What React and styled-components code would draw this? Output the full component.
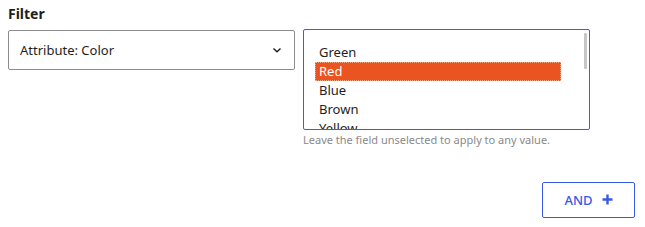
import React from "react";
import styled, { createGlobalStyle } from "styled-components";

const Global = createGlobalStyle`
  html, body { margin: 0; padding: 0; background: #fff; }
  body { font-family: "Noto Sans", "Open Sans", sans-serif; color: #1e1e1e; }
  * { box-sizing: border-box; }
`;

const Page = styled.div`
  width: 645px;
  height: 227px;
  padding: 4px 8px 0 8px;
  display: flex;
  flex-direction: column;
`;

const Label = styled.div`
  font-size: 14px;
  font-weight: 700;
  line-height: 20px;
  height: 20px;
  color: #1e1e1e;
  margin-bottom: 5px;
`;

const Row = styled.div`
  display: flex;
  align-items: flex-start;
  gap: 8px;
`;

const Select = styled.div`
  width: 287px;
  height: 40px;
  margin-top: 1px;
  border: 1px solid #8c8c8c;
  border-radius: 2px;
  display: flex;
  align-items: center;
  justify-content: space-between;
  padding: 0 11px 0 11px;
  font-size: 13px;
  color: #1e1e1e;
`;

const Chevron = styled.svg`
  width: 12px;
  height: 12px;
`;

const ListCol = styled.div`
  display: flex;
  flex-direction: column;
  gap: 3px;
`;

const ListBox = styled.div`
  position: relative;
  width: 287px;
  height: 101px;
  border: 1px solid #3b5ee6;
  border-radius: 2px;
  padding: 13px 28px 0 11px;
  overflow: hidden;
`;

const Option = styled.div`
  height: 19px;
  line-height: 19px;
  font-size: 13px;
  padding-left: 4px;
  color: ${p => (p.$selected ? "#fff" : "#1e1e1e")};
  background: ${p => (p.$selected ? "#e95420" : "transparent")};
  outline: ${p => (p.$selected ? "1px dotted #f7a784" : "none")};
  outline-offset: -1px;
`;

const Thumb = styled.div`
  position: absolute;
  right: 2px;
  top: 3px;
  width: 3px;
  height: 36px;
  background: #c6c6c6;
  border-radius: 1px;
`;

const Help = styled.div`
  font-size: 11px;
  color: #8a8a8a;
  line-height: 14px;
`;

const Footer = styled.div`
  display: flex;
  justify-content: flex-end;
  margin-top: 35px;
  padding-right: 2px;
`;

const AndButton = styled.button`
  width: 93px;
  height: 36px;
  border: 1px solid #3858e9;
  border-radius: 2px;
  background: #fff;
  color: #3858e9;
  font-family: inherit;
  font-size: 13px;
  font-weight: 500;
  display: flex;
  align-items: center;
  justify-content: center;
  gap: 9px;
  padding: 0;
  cursor: pointer;
`;

const Plus = styled.svg`
  width: 11px;
  height: 11px;
  margin-top: -2px;
`;

const colors = ["Green", "Red", "Blue", "Brown", "Yellow"];

export default function App() {
  return (
    <>
      <Global />
      <Page>
        <Label>Filter</Label>
        <Row>
          <Select>
            <span>Attribute: Color</span>
            <Chevron viewBox="0 0 12 12">
              <path d="M2.5 4.5 L6 7.8 L9.5 4.5" fill="none" stroke="#1e1e1e" strokeWidth="1.4" />
            </Chevron>
          </Select>
          <ListCol>
            <ListBox>
              {colors.map(c => (
                <Option key={c} $selected={c === "Red"}>{c}</Option>
              ))}
              <Thumb />
            </ListBox>
            <Help>Leave the field unselected to apply to any value.</Help>
          </ListCol>
        </Row>
        <Footer>
          <AndButton>
            AND
            <Plus viewBox="0 0 11 11">
              <path d="M5.5 0.5 V10.5 M0.5 5.5 H10.5" stroke="#3858e9" strokeWidth="2.4" />
            </Plus>
          </AndButton>
        </Footer>
      </Page>
    </>
  );
}
